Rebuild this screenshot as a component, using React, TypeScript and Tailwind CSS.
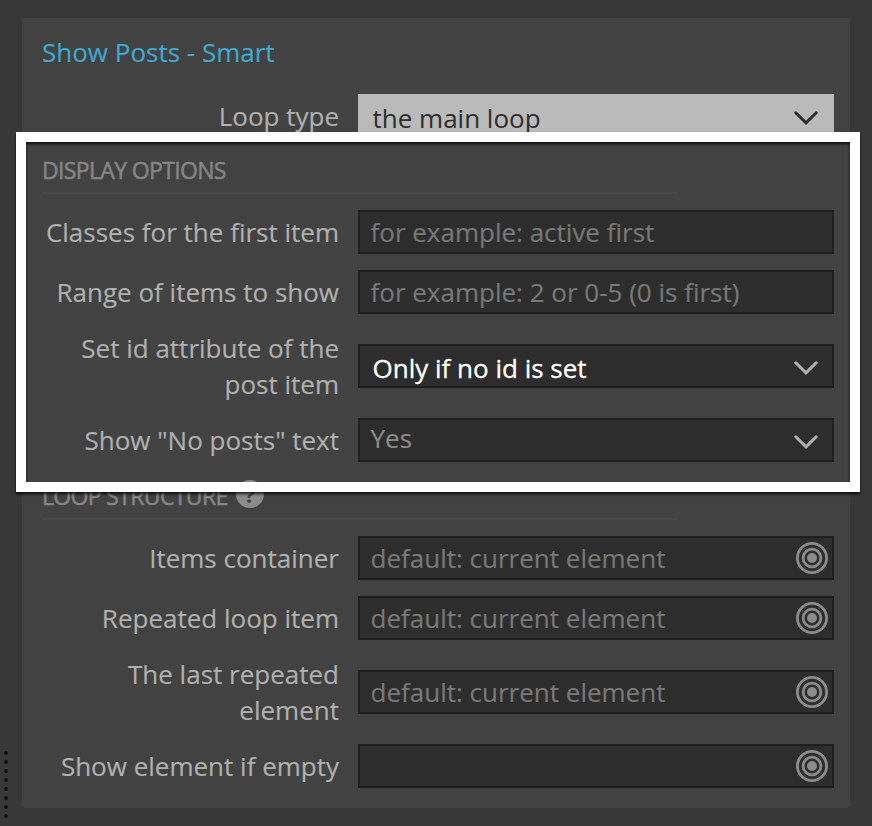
import type { ReactNode } from "react";

function Chevron({ className }: { className: string }) {
  return (
    <svg viewBox="0 0 24 14" className={`h-[14px] w-6 shrink-0 ${className}`} fill="none" stroke="currentColor" strokeWidth="3" strokeLinecap="round">
      <path d="M1.8 1.8 12 11.8 22.2 1.8" strokeLinejoin="miter" />
    </svg>
  );
}

function Target() {
  return (
    <svg viewBox="0 0 32 32" className="h-8 w-8 shrink-0 text-[#8b8b8b]" fill="none" stroke="currentColor" strokeWidth="2.8">
      <circle cx="16" cy="16" r="14.6" />
      <circle cx="16" cy="16" r="8.9" />
      <circle cx="16" cy="16" r="5" fill="currentColor" stroke="none" />
    </svg>
  );
}

function Row({ label, children }: { label: ReactNode; children: ReactNode }) {
  return (
    <div className="flex items-center gap-[19px]">
      <div className="w-[297px] shrink-0 text-right leading-9 whitespace-nowrap text-[#b0b0b0]">{label}</div>
      {children}
    </div>
  );
}

function TargetInput({ placeholder }: { placeholder?: string }) {
  return (
    <div className="flex h-11 w-[476px] items-center justify-between border-2 border-[#1f1f1f] bg-[#2d2d2d] pr-1 pl-[10.5px]">
      <span className="text-[#787878]">{placeholder}</span>
      <Target />
    </div>
  );
}

function TextInput({ placeholder }: { placeholder: string }) {
  return (
    <div className="flex h-11 w-[476px] items-center border-2 border-[#1f1f1f] bg-[#2d2d2d] pl-[10.5px] text-[#787878]">
      {placeholder}
    </div>
  );
}

function SectionHeader({ children }: { children: ReactNode }) {
  return (
    <div className="mb-4 flex h-10 w-[635px] items-start border-b-2 border-[#484848] text-[23px] leading-8 font-normal tracking-[-0.65px] text-[#858585] [-webkit-text-stroke:0.5px_#858585]">
      {children}
    </div>
  );
}

export default function App() {
  return (
    <div className="relative h-[826px] w-[872px] overflow-hidden bg-[#383838] px-[22px] pt-[18px] font-['Open_Sans','Noto_Sans',sans-serif] text-[26px] [-webkit-text-stroke:0.15px_currentColor]">
      <main className="h-[790px] w-[828px] rounded bg-[#424242] pr-4 pl-5">
        <h1 className="h-[76px] pt-4 leading-9 text-[#3fa9cf]">Show Posts - Smart</h1>
        <Row label="Loop type">
          <div className="flex h-11 w-[476px] items-center justify-between bg-[#bababa] pr-4 pl-[14.5px] text-[#2d2d2d] [-webkit-text-stroke:0]">
            <span className="pt-1">the main loop</span>
            <Chevron className="mt-1 text-[#2d2d2d]" />
          </div>
        </Row>
        <div className="h-4" />
        <SectionHeader>DISPLAY OPTIONS</SectionHeader>
        <div className="flex flex-col gap-4">
          <Row label="Classes for the first item"><TextInput placeholder="for example: active first" /></Row>
          <Row label="Range of items to show"><TextInput placeholder="for example: 2 or 0-5 (0 is first)" /></Row>
          <Row label={<>Set id attribute of the<br />post item</>}>
            <div className="flex h-11 w-[476px] items-center justify-between border-2 border-[#1f1f1f] bg-[#2d2d2d] pr-[14px] pl-[12.5px] text-white [-webkit-text-stroke:0.3px_white]">
              <span className="pt-1">Only if no id is set</span>
              <Chevron className="mt-1 text-[#b0b0b0]" />
            </div>
          </Row>
          <Row label={'Show "No posts" text'}>
            <div className="flex h-11 w-[476px] items-center justify-between border-2 border-[#1f1f1f] bg-[#2d2d2d] pr-[14px] pl-[10.5px] text-[#8b8b8b]">
              <span className="pb-1">Yes</span>
              <Chevron className="mt-1 text-[#b0b0b0]" />
            </div>
          </Row>
        </div>
        <div className="h-[18px]" />
        <SectionHeader>
          LOOP STRUCTURE
          <span className="ml-2 flex h-7 w-7 items-center justify-center rounded-full bg-[#8b8b8b] pb-px text-[22px] font-bold tracking-normal text-[#424242] [-webkit-text-stroke:0]">?</span>
        </SectionHeader>
        <div className="flex flex-col gap-4">
          <Row label="Items container"><TargetInput placeholder="default: current element" /></Row>
          <Row label="Repeated loop item"><TargetInput placeholder="default: current element" /></Row>
          <Row label={<>The last repeated<br />element</>}><TargetInput placeholder="default: current element" /></Row>
          <Row label="Show element if empty"><TargetInput /></Row>
        </div>
      </main>
      <div className="absolute top-[132px] left-4 h-[360px] w-[844px] border-[10px] border-white drop-shadow-[0_2px_1.5px_rgba(0,0,0,0.8)]" />
      <div className="absolute top-[751px] left-[4px] flex flex-col gap-[5px]">
        {Array.from({ length: 8 }, (_, i) => (
          <i key={i} className="block h-1 w-1 rounded-full bg-[#111111]" />
        ))}
      </div>
    </div>
  );
}
